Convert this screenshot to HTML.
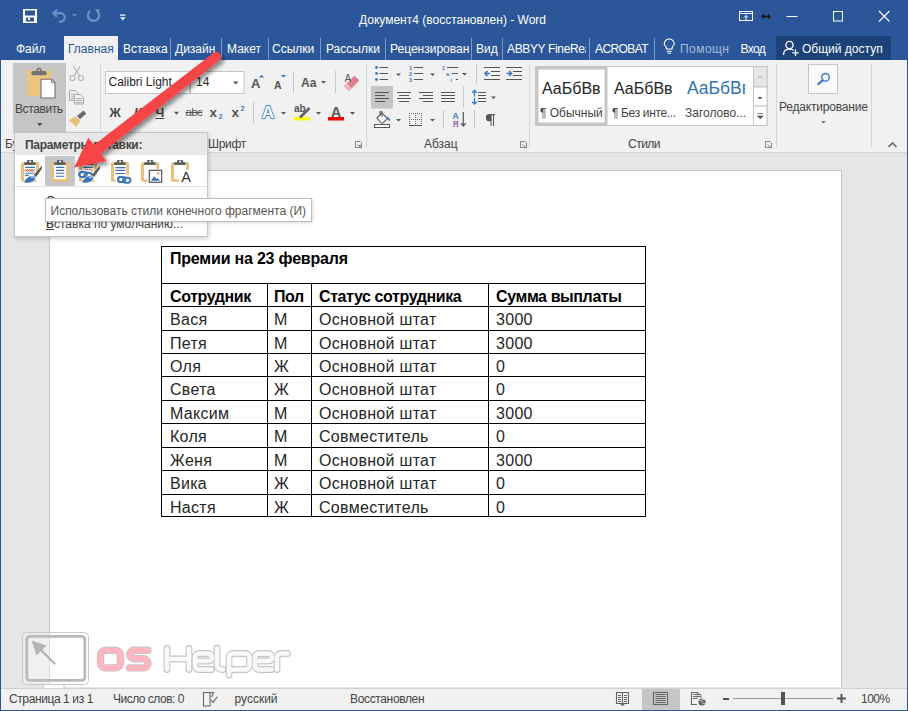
<!DOCTYPE html>
<html><head><meta charset="utf-8">
<style>
*{margin:0;padding:0;box-sizing:border-box}
html,body{width:908px;height:711px;overflow:hidden;background:#e6e6e6;font-family:"Liberation Sans",sans-serif}
.a{position:absolute}
.t{position:absolute;white-space:nowrap;line-height:1;z-index:5}
#title{left:0;top:0;width:908px;height:60px;background:#2b579a}
#ribbon{left:0;top:60px;width:908px;height:93px;background:#f1f1f1;border-bottom:1px solid #d5d5d5}
.tab{color:#fff;font-size:12px;top:42.5px}
.tsep{top:38px;width:1px;height:22px;background:#7b98c4}
.vsep{width:1px;background:#d6d6d6}
.gl{font-size:12px;color:#444;top:138px}
.rt{color:#444}
</style></head><body>
<div id="title" class="a"></div>
<div id="ribbon" class="a"></div>
<!-- left/right window borders -->
<div class="a" style="left:0;top:60px;width:1px;height:651px;background:#2b579a"></div>
<div class="a" style="left:907px;top:60px;width:1px;height:651px;background:#2b579a"></div>

<!-- title text -->
<div class="t" style="left:359px;top:14px;color:#fff;font-size:12px">Документ4 (восстановлен) - Word</div>

<!-- tabs -->
<div class="a" style="left:64px;top:36px;width:54px;height:25px;background:#f1f1f1"></div>
<div class="t tab" style="left:16px">Файл</div>
<div class="t tab" style="left:68px;color:#2b579a">Главная</div>
<div class="t tab" style="left:123px">Вставка</div>
<div class="t tab" style="left:175px">Дизайн</div>
<div class="t tab" style="left:227px">Макет</div>
<div class="t tab" style="left:272px">Ссылки</div>
<div class="t tab" style="left:326px">Рассылки</div>
<div class="t tab" style="left:390px">Рецензирован</div>
<div class="t tab" style="left:476px">Вид</div>
<div class="a" style="left:507px;top:36px;width:79px;height:24px;overflow:hidden;z-index:5"><div class="t tab" style="left:0;top:6.5px;letter-spacing:-0.35px">ABBYY FineReader</div></div>
<div class="t tab" style="left:595px;letter-spacing:-0.6px">ACROBAT</div>
<div class="t tab" style="left:680px;color:#a9bedd;letter-spacing:0.45px">Помощн</div>
<div class="t tab" style="left:740.5px;letter-spacing:-0.6px">Вход</div>
<div class="a" style="left:776px;top:36px;width:115px;height:24px;background:#1c4279"></div>
<div class="t tab" style="left:802px">Общий доступ</div>
<div class="a tsep" style="left:170px"></div>
<div class="a tsep" style="left:221px"></div>
<div class="a tsep" style="left:268px"></div>
<div class="a tsep" style="left:320px"></div>
<div class="a tsep" style="left:385px"></div>
<div class="a tsep" style="left:471px"></div>
<div class="a tsep" style="left:502px"></div>
<div class="a tsep" style="left:589px"></div>
<div class="a tsep" style="left:654px"></div>

<!-- ribbon group labels -->
<div class="t gl" style="left:5px">Буфер обмена</div>
<div class="t gl" style="left:208px;letter-spacing:-0.3px">Шрифт</div>
<div class="t gl" style="left:424px">Абзац</div>
<div class="t gl" style="left:628px;letter-spacing:-0.5px">Стили</div>
<div class="a vsep" style="left:100px;top:64px;height:84px"></div>
<div class="a vsep" style="left:366px;top:64px;height:84px"></div>
<div class="a vsep" style="left:529px;top:64px;height:84px"></div>
<div class="a vsep" style="left:776px;top:64px;height:84px"></div>
<div class="a vsep" style="left:871px;top:64px;height:84px"></div>


<!-- ribbon texts -->
<div class="t" style="left:15px;top:103px;font-size:12px;color:#444;letter-spacing:-0.4px">Вставить</div>
<div class="t" style="left:108.5px;top:76px;font-size:12px;color:#262626">Calibri Light</div>
<div class="t" style="left:196px;top:76px;font-size:12px;color:#262626">14</div>
<div class="t" style="left:251px;top:77px;font-size:13px;font-weight:bold;color:#555">A</div>
<div class="t" style="left:274px;top:79.5px;font-size:10.5px;font-weight:bold;color:#555">A</div>
<div class="t" style="left:301px;top:76.5px;font-size:12px;font-weight:bold;color:#555">Aa</div>
<div class="t" style="left:344.5px;top:74px;font-size:10px;color:#555">A</div>
<div class="t" style="left:109.5px;top:106.5px;font-size:12.5px;font-weight:bold;color:#444">Ж</div>
<div class="t" style="left:134px;top:106.5px;font-size:12.5px;font-weight:bold;font-style:italic;color:#444">К</div>
<div class="t" style="left:155.5px;top:106.5px;font-size:12.5px;font-weight:bold;color:#444;text-decoration:underline">Ч</div>
<div class="t" style="left:185.5px;top:107px;font-size:11.5px;color:#555;text-decoration:line-through;letter-spacing:-0.6px">abc</div>
<div class="t" style="left:209.5px;top:105.5px;font-size:13.5px;font-weight:bold;color:#555">x</div>
<div class="t" style="left:218.5px;top:113px;font-size:7px;font-weight:bold;color:#3c78c3">2</div>
<div class="t" style="left:231.5px;top:105.5px;font-size:13.5px;font-weight:bold;color:#555">x</div>
<div class="t" style="left:240.5px;top:105px;font-size:7px;font-weight:bold;color:#3c78c3">2</div>
<svg class="a" style="left:258px;top:100px;z-index:5" width="24" height="24"><text x="4" y="18.2" font-family="Liberation Sans" font-size="17" font-weight="bold" fill="#fff" stroke="#3c78c3" stroke-width="1.4" style="paint-order:stroke;filter:drop-shadow(0 0 1px #a8c6ea)">A</text></svg>
<div class="t" style="left:294px;top:104px;font-size:10px;font-weight:bold;color:#555">ab</div>
<div class="t" style="left:331px;top:105px;font-size:14px;font-weight:bold;color:#555">A</div>


<div class="t" style="left:542px;top:81px;font-size:16px;color:#262626">АаБбВв</div>
<div class="t" style="left:540px;top:107px;font-size:12px;color:#444">¶ Обычный</div>
<div class="t" style="left:614px;top:81px;font-size:16px;color:#262626">АаБбВв</div>
<div class="t" style="left:612px;top:107px;font-size:12px;color:#444;letter-spacing:-0.35px">¶ Без инте...</div>
<div class="a" style="left:686px;top:70px;width:59px;height:30px;overflow:hidden;z-index:5"><div class="t" style="left:1px;top:10px;font-size:17.5px;color:#2e74b5">АаБбВв</div></div>
<div class="t" style="left:685px;top:107px;font-size:12px;color:#444">Заголово...</div>
<div class="t" style="left:779px;top:101px;font-size:12px;color:#444;letter-spacing:-0.2px">Редактирование</div>

<!-- document page -->
<div class="a" style="left:49px;top:170px;width:793px;height:517px;background:#fff;border:1px solid #c6c6c6;border-bottom:none"></div>

<!-- table -->
<div class="a" style="left:161px;top:246px;width:485px;height:1px;background:#000"></div>
<div class="a" style="left:161px;top:283px;width:485px;height:1px;background:#000"></div>
<div class="a" style="left:161px;top:306px;width:485px;height:1px;background:#000"></div>
<div class="a" style="left:161px;top:330px;width:485px;height:1px;background:#000"></div>
<div class="a" style="left:161px;top:353px;width:485px;height:1px;background:#000"></div>
<div class="a" style="left:161px;top:376px;width:485px;height:1px;background:#000"></div>
<div class="a" style="left:161px;top:400px;width:485px;height:1px;background:#000"></div>
<div class="a" style="left:161px;top:423px;width:485px;height:1px;background:#000"></div>
<div class="a" style="left:161px;top:447px;width:485px;height:1px;background:#000"></div>
<div class="a" style="left:161px;top:470px;width:485px;height:1px;background:#000"></div>
<div class="a" style="left:161px;top:494px;width:485px;height:1px;background:#000"></div>
<div class="a" style="left:161px;top:516px;width:485px;height:1px;background:#000"></div>
<div class="a" style="left:161px;top:246px;width:1px;height:271px;background:#000"></div>
<div class="a" style="left:645px;top:246px;width:1px;height:271px;background:#000"></div>
<div class="a" style="left:267px;top:283px;width:1px;height:234px;background:#000"></div>
<div class="a" style="left:311px;top:283px;width:1px;height:234px;background:#000"></div>
<div class="a" style="left:488px;top:283px;width:1px;height:234px;background:#000"></div>
<div class="t" style="left:170px;top:251.3px;font-size:16px;font-weight:bold;letter-spacing:-0.2px;color:#000">Премии на 23 февраля</div>
<div class="t" style="left:170px;top:288.5px;font-size:16px;font-weight:bold;letter-spacing:-0.4px;color:#000">Сотрудник</div>
<div class="t" style="left:274px;top:288.5px;font-size:16px;font-weight:bold;letter-spacing:-0.4px;color:#000">Пол</div>
<div class="t" style="left:319px;top:288.5px;font-size:16px;font-weight:bold;letter-spacing:-0.4px;color:#000">Статус сотрудника</div>
<div class="t" style="left:496px;top:288.5px;font-size:16px;font-weight:bold;letter-spacing:-0.4px;color:#000">Сумма выплаты</div>
<div class="t" style="left:170px;top:311.5px;font-size:16px;letter-spacing:0.3px;color:#262626">Вася</div>
<div class="t" style="left:274px;top:311.5px;font-size:16px;letter-spacing:0.3px;color:#262626">М</div>
<div class="t" style="left:319px;top:311.5px;font-size:16px;letter-spacing:0.3px;color:#262626">Основной штат</div>
<div class="t" style="left:496px;top:311.5px;font-size:16px;letter-spacing:0.3px;color:#262626">3000</div>
<div class="t" style="left:170px;top:335.5px;font-size:16px;letter-spacing:0.3px;color:#262626">Петя</div>
<div class="t" style="left:274px;top:335.5px;font-size:16px;letter-spacing:0.3px;color:#262626">М</div>
<div class="t" style="left:319px;top:335.5px;font-size:16px;letter-spacing:0.3px;color:#262626">Основной штат</div>
<div class="t" style="left:496px;top:335.5px;font-size:16px;letter-spacing:0.3px;color:#262626">3000</div>
<div class="t" style="left:170px;top:358.5px;font-size:16px;letter-spacing:0.3px;color:#262626">Оля</div>
<div class="t" style="left:274px;top:358.5px;font-size:16px;letter-spacing:0.3px;color:#262626">Ж</div>
<div class="t" style="left:319px;top:358.5px;font-size:16px;letter-spacing:0.3px;color:#262626">Основной штат</div>
<div class="t" style="left:496px;top:358.5px;font-size:16px;letter-spacing:0.3px;color:#262626">0</div>
<div class="t" style="left:170px;top:381.5px;font-size:16px;letter-spacing:0.3px;color:#262626">Света</div>
<div class="t" style="left:274px;top:381.5px;font-size:16px;letter-spacing:0.3px;color:#262626">Ж</div>
<div class="t" style="left:319px;top:381.5px;font-size:16px;letter-spacing:0.3px;color:#262626">Основной штат</div>
<div class="t" style="left:496px;top:381.5px;font-size:16px;letter-spacing:0.3px;color:#262626">0</div>
<div class="t" style="left:170px;top:405.5px;font-size:16px;letter-spacing:0.3px;color:#262626">Максим</div>
<div class="t" style="left:274px;top:405.5px;font-size:16px;letter-spacing:0.3px;color:#262626">М</div>
<div class="t" style="left:319px;top:405.5px;font-size:16px;letter-spacing:0.3px;color:#262626">Основной штат</div>
<div class="t" style="left:496px;top:405.5px;font-size:16px;letter-spacing:0.3px;color:#262626">3000</div>
<div class="t" style="left:170px;top:428.5px;font-size:16px;letter-spacing:0.3px;color:#262626">Коля</div>
<div class="t" style="left:274px;top:428.5px;font-size:16px;letter-spacing:0.3px;color:#262626">М</div>
<div class="t" style="left:319px;top:428.5px;font-size:16px;letter-spacing:0.3px;color:#262626">Совместитель</div>
<div class="t" style="left:496px;top:428.5px;font-size:16px;letter-spacing:0.3px;color:#262626">0</div>
<div class="t" style="left:170px;top:452.5px;font-size:16px;letter-spacing:0.3px;color:#262626">Женя</div>
<div class="t" style="left:274px;top:452.5px;font-size:16px;letter-spacing:0.3px;color:#262626">М</div>
<div class="t" style="left:319px;top:452.5px;font-size:16px;letter-spacing:0.3px;color:#262626">Основной штат</div>
<div class="t" style="left:496px;top:452.5px;font-size:16px;letter-spacing:0.3px;color:#262626">3000</div>
<div class="t" style="left:170px;top:475.5px;font-size:16px;letter-spacing:0.3px;color:#262626">Вика</div>
<div class="t" style="left:274px;top:475.5px;font-size:16px;letter-spacing:0.3px;color:#262626">Ж</div>
<div class="t" style="left:319px;top:475.5px;font-size:16px;letter-spacing:0.3px;color:#262626">Основной штат</div>
<div class="t" style="left:496px;top:475.5px;font-size:16px;letter-spacing:0.3px;color:#262626">0</div>
<div class="t" style="left:170px;top:499.5px;font-size:16px;letter-spacing:0.3px;color:#262626">Настя</div>
<div class="t" style="left:274px;top:499.5px;font-size:16px;letter-spacing:0.3px;color:#262626">Ж</div>
<div class="t" style="left:319px;top:499.5px;font-size:16px;letter-spacing:0.3px;color:#262626">Совместитель</div>
<div class="t" style="left:496px;top:499.5px;font-size:16px;letter-spacing:0.3px;color:#262626">0</div>

<!-- paste popup -->
<div class="a" style="left:14px;top:132px;width:194px;height:105px;background:#fff;border:1px solid #c6c6c6;box-shadow:1px 2px 4px rgba(0,0,0,0.18);z-index:10"></div>
<div class="a" style="left:15px;top:133px;width:192px;height:22px;background:#e8e8e8;z-index:10"></div>
<div class="a" style="left:45px;top:156px;width:30px;height:30px;background:#c6c6c6;z-index:10"></div>
<div class="a" style="left:15px;top:186px;width:192px;height:1px;background:#e2e2e2;z-index:10"></div>
<div class="t" style="left:25px;top:139px;font-size:12px;font-weight:bold;color:#444;z-index:11;letter-spacing:-0.3px">Параметры вставки:</div>
<div class="t" style="left:46px;top:195px;font-size:12px;color:#262626;z-index:11">Специальная вставка...</div>
<div class="t" style="left:46px;top:218px;font-size:12px;color:#444;z-index:11;text-decoration:underline;text-decoration-thickness:1px">В</div>
<div class="t" style="left:46px;top:218px;font-size:12px;color:#444;z-index:11">Вставка по умолчанию...</div>
<svg class="a" style="left:0;top:0;z-index:12" width="908" height="711" viewBox="0 0 908 711">
<defs>
<g id="clipb">
<path d="M1.5,2.3 H16.6 A1.5,1.5 0 0 1 18.1,3.8 V20.2 A1.5,1.5 0 0 1 16.6,21.7 H1.5 A1.5,1.5 0 0 1 0,20.2 V3.8 A1.5,1.5 0 0 1 1.5,2.3 Z" fill="#e8c07a"/>
</g>
<g id="clipk">
<path d="M3.1,5 V3.3 A1,1 0 0 1 4.1,2.3 H6 V1 A1,1 0 0 1 7,0 H11.2 A1,1 0 0 1 12.2,1 V2.3 H13.7 A1,1 0 0 1 14.7,3.3 V5 Z" fill="#5f5f5f"/>
<circle cx="9.1" cy="1.6" r="1" fill="#fff"/>
</g>
<g id="chain2" fill="none" stroke="#3a73b8" stroke-width="1.9">
<rect x="1" y="1" width="7.5" height="5" rx="2.5"/>
<rect x="6" y="1.8" width="7.5" height="5" rx="2.5"/>
<path d="M6.2,1 H5.5" stroke="#fff" stroke-width="2"/>
<path d="M6,1 H3.5 A2.5,2.5 0 0 0 3.5,6" stroke-width="1.9"/>
</g>
<g id="brush1">
<path d="M20.8,5.8 L21,8.5 L15.6,16.2 L13.2,14.4 Z" fill="#5f5f5f"/>
<path d="M12.6,15 L13.8,13.6 L16.4,15.6 L15.2,17 Z" fill="#5f5f5f"/>
<path d="M2.8,22.8 C4,19 7.5,15.8 11.2,15.8 C13.6,15.8 15.2,17.2 14.2,19.4 C12.8,22.2 7.8,23.6 2.8,22.8 Z" fill="#3a73b8" stroke="#fff" stroke-width="0.7"/>
<path d="M10,17.6 C11,16.8 12.6,17 12.6,18.2" stroke="#fff" stroke-width="1" fill="none"/>
</g>
</defs>
<!-- icon1 -->
<g transform="translate(21,160)">
<use href="#clipb"/>
<rect x="3" y="4" width="12.1" height="15.4" fill="#fff"/>
<use href="#clipk"/>
<path d="M4.2,7.4 H14 M4.2,13.3 H13 M4.2,15.4 H7.6" stroke="#3a73b8" stroke-width="1.1"/>
<path d="M4,9.2 l1.2,1.4 l1.2,-1.4 l1.2,1.4 l1.2,-1.4 l1.2,1.4 l1.2,-1.4 l1.2,1.4 l1.2,-1.4 M4,11.6 l1.2,-1.4 l1.2,1.4 l1.2,-1.4 l1.2,1.4 l1.2,-1.4 l1.2,1.4 l1.2,-1.4 l1.2,1.4" stroke="#d24726" stroke-width="0.9" fill="none"/>
<path d="M12.5,17 L15.5,13.5 L20,16 V21 L17,22.5 Z" fill="#fff"/>
<use href="#brush1"/>
</g>
<!-- icon2 -->
<g transform="translate(51,160)">
<use href="#clipb"/>
<rect x="3" y="4" width="12.1" height="15.2" fill="#fff"/>
<use href="#clipk"/>
<path d="M5,7.4 H13.3 M5,10.4 H13.3 M5,13.3 H13.3 M5,16.3 H13.3" stroke="#3a73b8" stroke-width="1.1"/>
</g>
<!-- icon3 -->
<g transform="translate(79,160)">
<use href="#clipb"/>
<rect x="3" y="4" width="12.1" height="15.4" fill="#fff"/>
<use href="#clipk"/>
<path d="M4.2,7.4 H14" stroke="#3a73b8" stroke-width="1.1"/>
<path d="M6,9.2 l1.2,1.4 l1.2,-1.4 l1.2,1.4 l1.2,-1.4 l1.2,1.4 l1.2,-1.4 M6,11.6 l1.2,-1.4 l1.2,1.4 l1.2,-1.4 l1.2,1.4 l1.2,-1.4 l1.2,1.4" stroke="#d24726" stroke-width="0.9" fill="none"/>
<rect x="-2" y="10" width="14" height="8" fill="#fff"/>
<g transform="translate(-0.7,11)"><use href="#chain2"/></g>
<path d="M12.5,17 L15.5,13.5 L20,16 V21 L17,22.5 Z" fill="#fff"/>
<use href="#brush1"/>
</g>
<!-- icon4 -->
<g transform="translate(111,160)">
<use href="#clipb"/>
<rect x="3" y="4" width="12.1" height="15.4" fill="#fff"/>
<use href="#clipk"/>
<path d="M4.3,7.6 H14.3 M4.3,10.4 H14.3 M4.3,13.5 H14.3" stroke="#3a73b8" stroke-width="1.1"/>
<rect x="4.5" y="14.8" width="17" height="9" fill="#fff"/>
<g transform="translate(6,16)"><use href="#chain2"/></g>
</g>
<!-- icon5 -->
<g transform="translate(141,160)">
<use href="#clipb"/>
<rect x="3" y="4" width="12.1" height="15.3" fill="#fff"/>
<rect x="6.5" y="9" width="16" height="15" fill="#fff"/>
<use href="#clipk"/>
<rect x="8.3" y="10.3" width="12.4" height="12" fill="#fff" stroke="#555" stroke-width="1.2"/>
<path d="M9.8,20.8 L13.3,16.3 L15.5,19 L16.5,18 L19.2,20.8 Z" fill="#3a73b8"/>
<circle cx="17.3" cy="13.5" r="1.3" fill="#e8a860"/>
</g>
<!-- icon6 -->
<g transform="translate(171,160)">
<use href="#clipb"/>
<rect x="3" y="4" width="12.1" height="15.3" fill="#fff"/>
<rect x="8" y="9.5" width="15" height="14" fill="#fff"/>
<use href="#clipk"/>
<text x="10.2" y="21.8" font-family="Liberation Sans" font-size="14.5" fill="#333">A</text>
</g>
</svg>
<!-- tooltip -->
<div class="a" style="left:45px;top:198px;width:267px;height:24px;background:#fff;border:1px solid #bdbdbd;box-shadow:1px 1px 3px rgba(0,0,0,0.15);z-index:20"></div>
<div class="t" style="left:50.5px;top:205px;font-size:12px;color:#575757;z-index:21">Использовать стили конечного фрагмента (И)</div>


<!-- arrow -->
<svg class="a" style="left:0;top:0;z-index:30" width="908" height="711" viewBox="0 0 908 711">
<defs><filter id="sh" x="-20%" y="-20%" width="140%" height="140%"><feGaussianBlur in="SourceAlpha" stdDeviation="2.2"/><feOffset dx="2.5" dy="3" result="b"/><feComponentTransfer><feFuncA type="linear" slope="0.45"/></feComponentTransfer><feMerge><feMergeNode/><feMergeNode in="SourceGraphic"/></feMerge></filter></defs>
<path filter="url(#sh)" fill="#f64447" d="M213.35,53.01 A4.8,4.8 0 0 1 219.25,60.59 L100.87,153.84 L106.52,161.10 L74.10,167.60 L88.33,137.75 L93.98,145.01 Z"/>
</svg>


<!-- watermark -->
<svg class="a" style="left:0;top:0;z-index:35" width="908" height="711" viewBox="0 0 908 711">
<rect x="22.5" y="632.5" width="66" height="52" rx="4" fill="rgba(255,255,255,0.3)" stroke="#c8c8c8" stroke-width="1"/>
<rect x="26.8" y="636.3" width="58" height="44" rx="3" fill="rgba(255,255,255,0.2)" stroke="#bababa" stroke-width="2.8"/>
<path d="M43.5,685 V688 A2,2 0 0 0 45.5,690 H62 A2,2 0 0 0 64,688 V685" fill="#fff" stroke="#c8c8c8" stroke-width="1"/>
<path d="M54.5,663.5 L38,647" stroke="#b5b5b5" stroke-width="2.4" stroke-linecap="round"/>
<path d="M31.5,640.5 L46.5,645.5 L36.5,655.5 Z" fill="#b5b5b5"/>
<g fill="none" stroke-linecap="round" stroke-linejoin="round">
<g stroke="#c4c4c4" stroke-width="7.4">
<rect x="100.5" y="650.3" width="20" height="17.6" rx="5"/>
<path d="M148,650.3 H134 A4.2,4.2 0 0 0 129.8,654.5 A4.2,4.2 0 0 0 134,658.7 H143.5 A4.5,4.5 0 0 1 148,663.2 A4.5,4.5 0 0 1 143.5,667.9 H129.5"/>
</g>
<g stroke="#ffb6c2" stroke-width="5.6">
<rect x="100.5" y="650.3" width="20" height="17.6" rx="5"/>
<path d="M148,650.3 H134 A4.2,4.2 0 0 0 129.8,654.5 A4.2,4.2 0 0 0 134,658.7 H143.5 A4.5,4.5 0 0 1 148,663.2 A4.5,4.5 0 0 1 143.5,667.9 H129.5"/>
</g>
<g id="helper">
<path d="M167,648.5 V669.5 M189,648.5 V669.5 M167,659 H189"/>
<path d="M211.5,669.5 H199 A4,4 0 0 1 195,665.5 V657.5 A4,4 0 0 1 199,653.5 H208 A4,4 0 0 1 212,657.5 A3.5,3.5 0 0 1 208.5,661 H195.5"/>
<path d="M217,648 V665 A4.5,4.5 0 0 0 221.5,669.5 H223"/>
<path d="M229,675 V657.5 A4,4 0 0 1 233,653.5 H245.5 A4,4 0 0 1 249.5,657.5 V665.5 A4,4 0 0 1 245.5,669.5 H229.5"/>
<path d="M271.5,669.5 H259 A4,4 0 0 1 255,665.5 V657.5 A4,4 0 0 1 259,653.5 H268 A4,4 0 0 1 272,657.5 A3.5,3.5 0 0 1 268.5,661 H255.5"/>
<path d="M277,669.5 V657.5 A4,4 0 0 1 281,653.5 H287.5"/>
</g>
</g>
<use href="#helper" stroke="#c4c4c4" stroke-width="6.8" fill="none" stroke-linecap="round" stroke-linejoin="round"/>
<use href="#helper" stroke="#fafafa" stroke-width="4.6" fill="none" stroke-linecap="round" stroke-linejoin="round"/>
</svg>

<!-- status bar -->
<div class="a" style="left:1px;top:688px;width:906px;height:22px;background:#f1f1f1;border-top:1px solid #d0d0d0;z-index:40"></div>
<div class="a" style="left:0;top:710px;width:908px;height:1px;background:#2b579a;z-index:41"></div>
<div class="a" style="left:642px;top:689px;width:38px;height:21px;background:#c6c6c6;z-index:41"></div>
<div class="t" style="left:9px;top:693px;font-size:12px;color:#444;z-index:42;letter-spacing:-0.4px">Страница 1 из 1</div>
<div class="t" style="left:113px;top:693px;font-size:12px;color:#444;z-index:42;letter-spacing:-0.5px">Число слов: 0</div>
<div class="t" style="left:234.5px;top:693px;font-size:12px;color:#444;z-index:42">русский</div>
<div class="t" style="left:350px;top:693px;font-size:12px;color:#444;z-index:42;letter-spacing:-0.35px">Восстановлен</div>
<div class="t" style="left:861px;top:693px;font-size:12px;color:#444;z-index:42;letter-spacing:-0.5px">100%</div>
<svg class="a" style="left:0;top:0;z-index:43" width="908" height="711" viewBox="0 0 908 711">
<g fill="none" stroke="#666" stroke-width="1.1">
<path d="M203.5,692.5 H210 V706 H203.5 Z M210,692.5 H213.5 L211.5,697"/>
<path d="M211,700 L213,702.5 L217.5,696.5"/>
<!-- read mode -->
<path d="M616.5,692.5 H622.5 V703.5 H616.5 Z M622.5,692.5 H628.5 V703.5 H622.5 Z M620.5,703.5 L622.5,705.5 L624.5,703.5"/>
<path d="M618,695.5 H621 M618,697.5 H621 M618,699.5 H621 M618,701.5 H621 M624,695.5 H627 M624,697.5 H627 M624,699.5 H627 M624,701.5 H627"/>
<!-- print layout -->
<rect x="653.5" y="692.5" width="14" height="12"/>
<path d="M655.5,694.5 H665.5 M655.5,696.5 H665.5 M655.5,698.5 H665.5 M655.5,700.5 H665.5 M655.5,702.5 H665.5"/>
<!-- web layout -->
<path d="M697.5,699 V692.5 H691.5 V704.5 H697"/>
<path d="M693,694.5 H700.5 M693,696.5 H700.5 M693,698.5 H697"/>
</g>
<rect x="697.5" y="692" width="3.5" height="7" fill="#f1f1f1"/>
<path d="M693,694.5 H700.5 M693,696.5 H700.5 M693,698.5 H697 M691.5,692.5 H698 L701,695.5 V698" stroke="#666" stroke-width="1" fill="none"/>
<circle cx="702" cy="702" r="4.2" fill="#f1f1f1"/>
<circle cx="702" cy="702" r="3.6" fill="#666"/>
<path d="M699.5,700.5 C701,700 702,701 702.5,702.5 C703,703.5 704,704 705,703.5 M701.5,698.8 C702.5,699.5 703.5,699.5 704.5,699.5" stroke="#f1f1f1" stroke-width="0.9" fill="none"/>
<rect x="723" y="698" width="6" height="2" fill="#555"/>
<rect x="733" y="698" width="100" height="1" fill="#999"/>
<rect x="781" y="692" width="4" height="13" fill="#555"/>
<path d="M837,698.5 H846 M841.5,694 V703" stroke="#555" stroke-width="2"/>
</svg>

<svg class="a" style="left:0;top:0" width="908" height="711" viewBox="0 0 908 711">
<!-- QAT -->
<rect x="23" y="9" width="14" height="14" fill="#fff"/>
<rect x="25" y="10.5" width="10" height="5" fill="#2b579a"/>
<rect x="26" y="17.5" width="8" height="4" fill="#2b579a"/>
<rect x="28" y="17.5" width="2" height="2.5" fill="#fff"/>
<g fill="none" stroke="#6f8fc4" stroke-width="2.2">
<path d="M53.5,13.2 H60.5 A4.2,4.2 0 0 1 60.5,21.6 H59"/>
<path d="M57,9.6 L53.4,13.2 L57,16.8"/>
<path d="M96.8,10.8 A5.6,5.6 0 1 1 90.2,10.8"/>
</g>
<path d="M94.5,9 L99.5,9.2 L98.8,14 Z" fill="#6f8fc4"/>
<path d="M72,14 h5 l-2.5,2.5z" fill="#6f8fc4"/>
<rect x="120" y="14.5" width="5.5" height="1.2" fill="#fff"/>
<path d="M120,17.2 h5.6 l-2.8,3.4z" fill="#fff"/>
<!-- window controls -->
<g fill="none" stroke="#fff" stroke-width="1">
<rect x="739.5" y="11.5" width="13" height="9"/>
<path d="M740,13.5 H752"/>
<path d="M746,20.5 V15.5 M744,17.5 L746,15.5 L748,17.5"/>
<path d="M786.5,16.5 H797.5"/>
<rect x="833.5" y="11.5" width="9" height="9.5"/>
</g>
<path d="M879,11 L889.5,21.5 M889.5,11 L879,21.5" stroke="#fff" stroke-width="1.1" fill="none"/>
<path d="M761,16.5 L764,13.5 V15.6 H768 V13.5 L771,16.5 L768,19.5 V17.4 H764 V19.5 Z" fill="#1a1a1a"/>
<!-- bulb -->
<g fill="none" stroke="#fff" stroke-width="1.1">
<path d="M666.5,49 C666.5,46 664.5,45 664.5,45.5 A5,5 0 1 1 674,45.5 C674,45 672,46 672,49 Z"/>
<path d="M666.8,51.2 H671.8 M667.5,53.2 H671"/>
</g>
<!-- user -->
<g fill="none" stroke="#fff" stroke-width="1.3">
<circle cx="789.5" cy="45" r="3.6"/>
<path d="M783.5,55 C783.5,51 786,49.2 789.5,49.2 C791.5,49.2 792.5,49.6 793.5,50.3"/>
<path d="M795.5,49.5 V56 M792.3,52.8 H798.7"/>
</g>

<!-- clipboard group -->
<rect x="13" y="63" width="53" height="70" fill="#c5c5c5"/>
<rect x="27" y="70.5" width="24" height="25.5" rx="1" fill="#ebc47d"/>
<rect x="31.5" y="71" width="15" height="4.2" rx="1.5" fill="#737373"/>
<circle cx="39" cy="70.3" r="2.6" fill="#737373"/>
<circle cx="39" cy="70.3" r="1" fill="#c5c5c5"/>
<path d="M41,79.2 H51.8 L55,82.4 V98 H41 Z" fill="#fff" stroke="#737373" stroke-width="1.1"/>
<path d="M51.5,79.2 V82.7 H55" fill="none" stroke="#737373" stroke-width="1"/>
<path d="M37,123 h5.4 l-2.7,3z" fill="#444"/>
<!-- scissors disabled -->
<g fill="none" stroke="#b4b4b4" stroke-width="1.2">
<circle cx="72.5" cy="78" r="2.5"/><circle cx="81" cy="78" r="2.5"/>
<path d="M74,75.8 L80,66.5 M79.5,75.8 L73.5,66.5"/>
</g>
<!-- copy disabled -->
<g fill="#f1f1f1" stroke="#a8a8a8" stroke-width="1">
<path d="M69.5,90.5 H75.5 L78,93 V100.5 H69.5 Z"/>
</g>
<g stroke="#a8a8a8" stroke-width="0.9"><path d="M71,94 H74 M71,96.2 H75 M71,98.4 H74"/></g>
<g fill="#f1f1f1" stroke="#a8a8a8" stroke-width="1">
<path d="M74.5,94.5 H80.5 L83.5,97.5 V104 H74.5 Z"/>
</g>
<g stroke="#a8a8a8" stroke-width="0.9"><path d="M76,98.5 H81.5 M76,100.5 H82 M76,102.5 H82"/></g>
<!-- format painter -->
<path d="M77,116 L83.5,110.5 L86.3,113.5 L80,119.3 Z" fill="#6b6b6b"/>
<path d="M68.8,120.3 L75.8,116.3 L80.3,121 L76.2,127 Z" fill="#e8c07a"/>

<!-- font group -->
<rect x="105.5" y="71.5" width="84" height="22" fill="#fff" stroke="#c6c6c6"/>
<rect x="190.5" y="71.5" width="53.5" height="22" fill="#fff" stroke="#c6c6c6"/>
<path d="M233,81.5 h5.5 l-2.75,3z" fill="#555"/>
<path d="M259,77.6 h5.2 l-2.6,-2.8z" fill="#3c78c3"/>
<path d="M281,75 h5 l-2.5,2.8z" fill="#3c78c3"/>
<rect x="293" y="71" width="1" height="22" fill="#c8c8c8"/>
<path d="M321,81 h5 l-2.5,2.8z" fill="#555"/>
<rect x="335" y="71" width="1" height="22" fill="#c8c8c8"/>
<g transform="rotate(-45 352 83)"><rect x="344" y="79.5" width="15" height="7" rx="1" fill="#e0818f"/><rect x="344" y="79.5" width="4" height="7" fill="#f2b7bf"/></g>
<path d="M174,111.8 h5 l-2.5,3z" fill="#555"/>
<rect x="253" y="102" width="1" height="22" fill="#c8c8c8"/>
<path d="M281,112 h5 l-2.5,2.8z" fill="#555"/>
<path d="M316,112 h5 l-2.5,2.8z" fill="#555"/>
<path d="M350,112 h5 l-2.5,2.8z" fill="#555"/>
<rect x="294" y="117" width="16" height="3.5" fill="#ffff00"/>
<rect x="328" y="117" width="16" height="3.5" fill="#ff0000"/>
<path d="M299,116.5 L308.5,107 L310.5,109 L301,118.5 Z" fill="#666"/>
<path d="M360.5,141.5 h-5 v6 h6 v-5 M357.5,144.5 l4,3.5 M361.5,148 v-2.5 h-2.5" fill="none" stroke="#777" stroke-width="0.9"/>
</svg>


<svg class="a" style="left:0;top:0;z-index:3" width="908" height="711" viewBox="0 0 908 711">
<!-- paragraph group -->
<g fill="#3c78c3">
<circle cx="376.5" cy="67.5" r="1.4"/><circle cx="376.5" cy="73.5" r="1.4"/><circle cx="376.5" cy="79.5" r="1.4"/>
</g>
<g stroke="#555" stroke-width="1">
<path d="M379.5,67.5 H388 M379.5,73.5 H388 M379.5,79.5 H388"/>
<path d="M414,67.5 H423 M414,73.5 H423 M414,79.5 H423"/>
<path d="M447,67.5 H458 M452,73.5 H458 M456,79.5 H458"/>
</g>
<g font-family="Liberation Sans" font-size="5.5" font-weight="bold" fill="#3c78c3">
<text x="409" y="70">1</text><text x="409" y="75.8">2</text><text x="409" y="81.6">3</text>
<text x="442" y="69.8">1</text><text x="446" y="75.6">a</text><text x="450.5" y="81.6">i</text>
</g>
<path d="M396,73.5 h5 l-2.5,2.5z M430,73.5 h5 l-2.5,2.5z M462,73 h5 l-2.5,2.5z" fill="#555"/>
<rect x="476" y="64" width="1" height="20" fill="#c8c8c8"/>
<g stroke="#555" stroke-width="1">
<path d="M484,67.5 H500 M491,71.5 H500 M491,75.5 H500 M484,79.5 H500"/>
<path d="M506,67.5 H522 M513,71.5 H522 M513,75.5 H522 M506,79.5 H522"/>
</g>
<g stroke="#3c78c3" stroke-width="1.6" fill="none">
<path d="M490,73.5 H485 M487.5,71 L485,73.5 L487.5,76"/>
<path d="M506.5,73.5 H511.5 M509,71 L511.5,73.5 L509,76"/>
</g>
<rect x="371" y="86" width="22" height="22.5" fill="#c5c5c5"/>
<g stroke="#555" stroke-width="1">
<path d="M375,92.5 H389 M375,95.5 H385 M375,98.5 H389 M375,101.5 H385"/>
<path d="M397,92.5 H411 M399,95.5 H409 M397,98.5 H411 M399,101.5 H409"/>
<path d="M419,92.5 H433 M423,95.5 H433 M419,98.5 H433 M423,101.5 H433"/>
<path d="M441,92.5 H455 M441,95.5 H455 M441,98.5 H455 M441,101.5 H455"/>
<path d="M478,92.5 H486 M478,95.5 H486 M478,98.5 H486 M478,101.5 H486"/>
</g>
<rect x="463" y="86.5" width="1" height="20.5" fill="#c8c8c8"/>
<g stroke="#3c78c3" stroke-width="1.3" fill="none">
<path d="M474.5,90.5 V96.5 M472.2,92.8 L474.5,90.5 L476.8,92.8 M474.5,98 V104 M472.2,101.7 L474.5,104 L476.8,101.7"/>
</g>
<path d="M491,96.5 h5 l-2.5,2.5z" fill="#555"/>
<!-- row 3 -->
<g fill="none" stroke="#555" stroke-width="1.1">
<rect x="374.5" y="124.5" width="15" height="3" fill="#fff" stroke-width="1"/>
<path d="M377,118 L382,113 L387.5,118.5 L383,123 H381.5 Z" fill="#fff"/>
<path d="M380,115 V111.7 H382 V117"/>
</g>
<path d="M387,117 C389.5,117 390.5,119.5 389.5,121.5 L387.5,119 Z" fill="#3c78c3"/>
<path d="M396,119 h5 l-2.5,2.5z M430,119 h5 l-2.5,2.5z" fill="#555"/>
<rect x="409" y="113" width="1" height="1" fill="#666"/><rect x="411" y="113" width="1" height="1" fill="#666"/><rect x="413" y="113" width="1" height="1" fill="#666"/><rect x="415" y="113" width="1" height="1" fill="#666"/><rect x="417" y="113" width="1" height="1" fill="#666"/><rect x="419" y="113" width="1" height="1" fill="#666"/><rect x="421" y="113" width="1" height="1" fill="#666"/><rect x="409" y="119" width="1" height="1" fill="#666"/><rect x="411" y="119" width="1" height="1" fill="#666"/><rect x="413" y="119" width="1" height="1" fill="#666"/><rect x="415" y="119" width="1" height="1" fill="#666"/><rect x="417" y="119" width="1" height="1" fill="#666"/><rect x="419" y="119" width="1" height="1" fill="#666"/><rect x="421" y="119" width="1" height="1" fill="#666"/><rect x="409" y="115" width="1" height="1" fill="#666"/><rect x="409" y="117" width="1" height="1" fill="#666"/><rect x="409" y="119" width="1" height="1" fill="#666"/><rect x="409" y="121" width="1" height="1" fill="#666"/><rect x="409" y="123" width="1" height="1" fill="#666"/><rect x="415" y="115" width="1" height="1" fill="#666"/><rect x="415" y="117" width="1" height="1" fill="#666"/><rect x="415" y="119" width="1" height="1" fill="#666"/><rect x="415" y="121" width="1" height="1" fill="#666"/><rect x="415" y="123" width="1" height="1" fill="#666"/><rect x="421" y="115" width="1" height="1" fill="#666"/><rect x="421" y="117" width="1" height="1" fill="#666"/><rect x="421" y="119" width="1" height="1" fill="#666"/><rect x="421" y="121" width="1" height="1" fill="#666"/><rect x="421" y="123" width="1" height="1" fill="#666"/><rect x="409" y="125" width="13" height="1" fill="#555"/>
<rect x="443" y="110" width="1" height="18" fill="#c8c8c8"/>
<rect x="474" y="110" width="1" height="18" fill="#c8c8c8"/>
<text x="452.5" y="118.5" font-family="Liberation Sans" font-size="8.5" font-weight="bold" fill="#3c78c3">A</text>
<text x="452.5" y="126.5" font-family="Liberation Sans" font-size="8.5" font-weight="bold" fill="#9065b0">Я</text>
<path d="M463.3,112 V126 M460.8,123.2 L463.3,126 L465.8,123.2" fill="none" stroke="#555" stroke-width="1.2"/>
<path d="M489.5,114 H495 V115.2 H494 V126 H493 V115.2 H491.6 V126 H490.6 V121.3 H489.5 A3.65,3.65 0 0 1 489.5,114 Z" fill="#555"/>
<path d="M525.5,141.5 h-5 v6 h6 v-5 M522.5,144.5 l4,3.5" fill="none" stroke="#777" stroke-width="0.9"/>

<!-- styles gallery -->
<rect x="535.5" y="66.5" width="231.5" height="59" fill="#fff" stroke="#c6c6c6"/>
<rect x="537" y="68" width="69" height="56" fill="none" stroke="#c6c6c6" stroke-width="3"/>
<rect x="753.5" y="66.5" width="13.5" height="20.5" fill="#e6e6e6" stroke="#c6c6c6"/>
<rect x="753.5" y="87" width="13.5" height="19" fill="#fff" stroke="#c6c6c6"/>
<rect x="753.5" y="106" width="13.5" height="19.5" fill="#fff" stroke="#c6c6c6"/>
<path d="M757.5,78 h5 l-2.5,-2.5z" fill="#c0c0c0"/>
<path d="M757.5,97 h5 l-2.5,2.5z" fill="#555"/>
<path d="M757.5,113.5 h5.5 M757.5,116 h5.5 l-2.75,2.7z" fill="#555" stroke="#555" stroke-width="0.8"/>
<path d="M770.5,141.5 h-5 v6 h6 v-5 M767.5,144.5 l4,3.5" fill="none" stroke="#777" stroke-width="0.9"/>

<!-- editing -->
<rect x="808.5" y="64.5" width="29" height="29" fill="#fafafa" stroke="#c6c6c6"/>
<circle cx="825.5" cy="77.3" r="3.8" fill="none" stroke="#3c78c3" stroke-width="1.4"/>
<path d="M822.6,80.3 L818.4,84" stroke="#3c78c3" stroke-width="2.3" stroke-linecap="round"/>
<path d="M821,121 h5 l-2.5,2.5z" fill="#777"/>
<path d="M888.5,147 L892.5,143 L896.5,147" fill="none" stroke="#666" stroke-width="1.6"/>
</svg>

</body></html>
